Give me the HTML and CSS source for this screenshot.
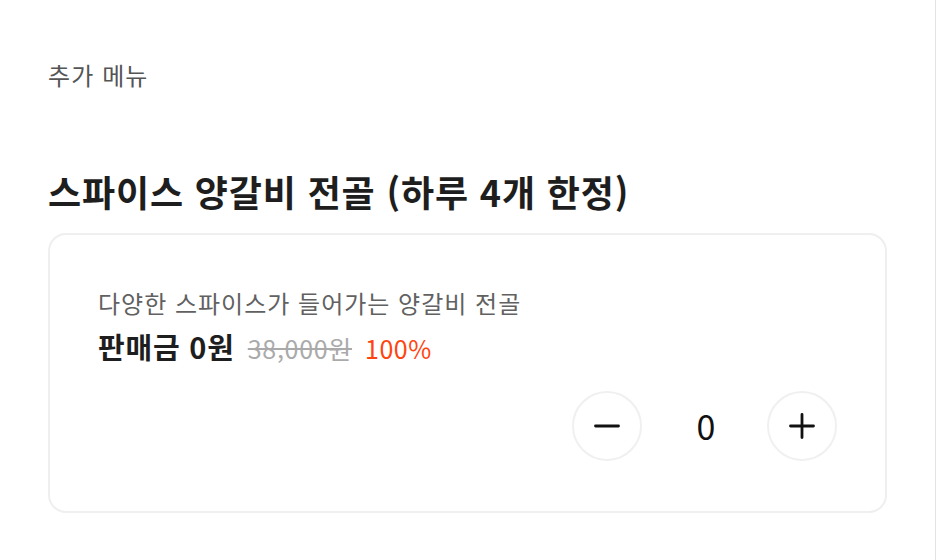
FILE: index.html
```html
<!DOCTYPE html>
<html lang="ko">
<head>
  <meta charset="UTF-8">
  <meta name="viewport" content="width=device-width, initial-scale=1.0">
  <title>추가 메뉴</title>
  <link rel="stylesheet" href="styles.css">
</head>
<body>
  <main class="page">
    <p class="section-label">추가 메뉴</p>

    <section class="menu">
      <h2 class="menu-title">스파이스 양갈비 전골 (하루 4개 한정)</h2>

      <div class="menu-card">
        <p class="menu-desc">다양한 스파이스가 들어가는 양갈비 전골</p>
        <div class="price-row">
          <strong class="price">판매금 0원</strong>
          <del class="price-old">38,000원</del>
          <span class="discount">100%</span>
        </div>

        <div class="counter">
          <button class="counter-btn" type="button" aria-label="빼기">
            <svg width="26" height="26" viewBox="0 0 26 26"><path d="M1.5 13h23" stroke="#111" stroke-width="2.8" stroke-linecap="round"/></svg>
          </button>
          <span class="counter-value">0</span>
          <button class="counter-btn" type="button" aria-label="더하기">
            <svg width="26" height="26" viewBox="0 0 26 26"><path d="M1.5 13h23M13 1.5v23" stroke="#111" stroke-width="2.8" stroke-linecap="round"/></svg>
          </button>
        </div>
      </div>
    </section>
  </main>
</body>
</html>
```

FILE: styles.css
```css
/* Reset */
* {
  margin: 0;
  padding: 0;
  box-sizing: border-box;
}

body {
  font-family: 'Noto Sans CJK KR', 'Noto Sans', sans-serif;
  color: #111;
  background-color: #fff;
}

/* Page */
.page {
  width: 936px;
  min-height: 560px;
  border-right: 1px solid #e4e4e4;
  padding: 57px 48px 40px 48px;
}

.section-label {
  font-size: 24px;
  line-height: 36px;
  color: #555;
  letter-spacing: 1.1px;
}

/* Menu */
.menu {
  margin-top: 74px;
}

.menu-title {
  font-size: 36px;
  font-weight: bold;
  line-height: 48px;
  letter-spacing: 0.85px;
  color: #1e1e1e;
}

.menu-card {
  margin-top: 18px;
  border: 2px solid #efefef;
  border-radius: 18px;
  padding: 51px 48px 50px 48px;
}

.menu-desc {
  font-size: 24px;
  line-height: 34px;
  color: #616161;
  letter-spacing: 1px;
}

.price-row {
  display: flex;
  align-items: baseline;
  gap: 13px;
  margin-top: 6px;
  line-height: 40px;
}

.price {
  font-size: 29px;
  font-weight: bold;
  letter-spacing: 0.8px;
  color: #1e1e1e;
}

.price-old {
  font-size: 25px;
  color: #aaa;
  letter-spacing: 0.7px;
}

.discount {
  font-size: 25px;
  letter-spacing: 0.5px;
  color: #ff4410;
}

/* Counter */
.counter {
  display: flex;
  justify-content: flex-end;
  align-items: center;
  margin-top: 23px;
}

.counter-btn {
  width: 70px;
  height: 70px;
  border: 2px solid #f0f0f0;
  border-radius: 50%;
  background: #fff;
  display: flex;
  align-items: center;
  justify-content: center;
  cursor: pointer;
}

.counter-value {
  width: 125px;
  padding-left: 3px;
  text-align: center;
  font-size: 34px;
  line-height: 40px;
  color: #111;
}
```
